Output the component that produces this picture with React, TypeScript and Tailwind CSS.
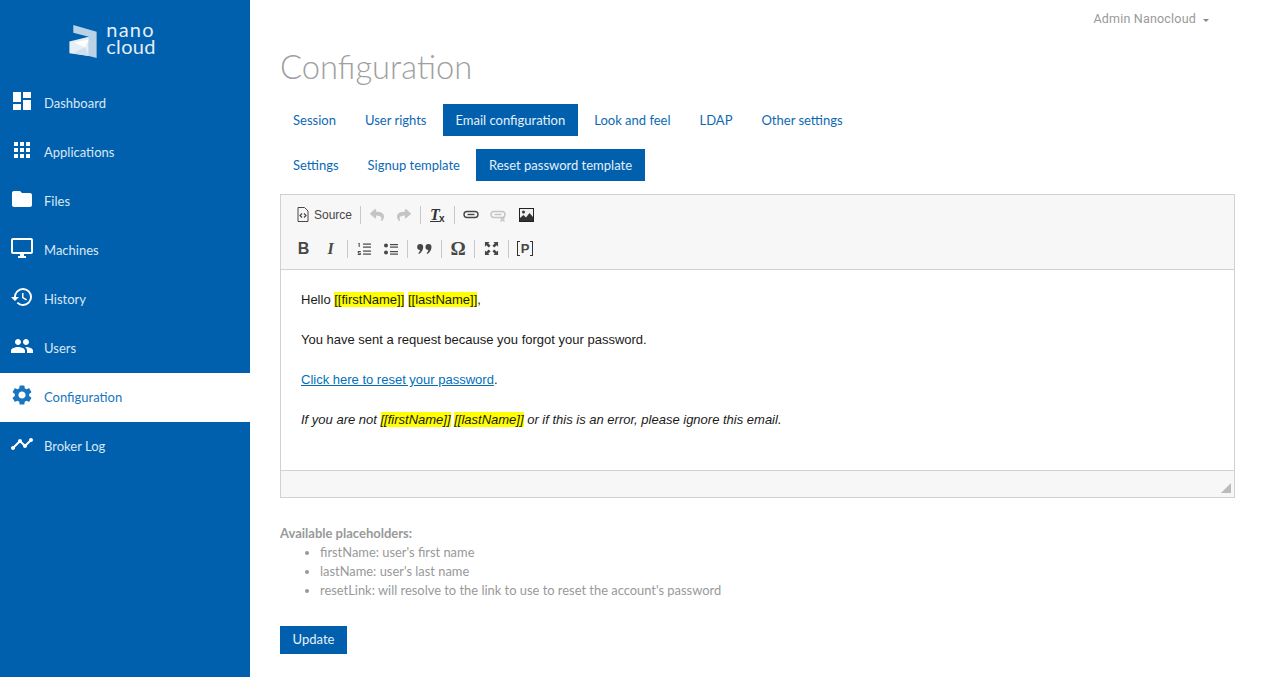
import { MdApps, MdDashboard, MdFolder, MdHistory, MdOutlineDesktopWindows, MdPeople, MdSettings, MdTimeline } from "react-icons/md";
import { FaReply, FaShare } from "react-icons/fa";
import type { ReactNode } from "react";

const navItems = [
  { label: "Dashboard", icon: MdDashboard, size: 24 },
  { label: "Applications", icon: MdApps, size: 24 },
  { label: "Files", icon: MdFolder, size: 24 },
  { label: "Machines", icon: MdOutlineDesktopWindows, size: 24 },
  { label: "History", icon: MdHistory, size: 24 },
  { label: "Users", icon: MdPeople, size: 24 },
  { label: "Configuration", icon: MdSettings, size: 24, active: true },
  { label: "Broker Log", icon: MdTimeline, size: 24 },
];

const mainTabs = ["Session", "User rights", "Email configuration", "Look and feel", "LDAP", "Other settings"];
const subTabs = ["Settings", "Signup template", "Reset password template"];

function Logo() {
  return (
    <div className="flex h-[79px] items-start justify-center pt-[21px] pr-[25px]">
      <svg width="29" height="35" viewBox="0 0 29 36" className="mt-[3px] mr-[8px]">
        <polygon points="4,1 28,8 28,35 20,33 20,13 4,9" fill="#b9d2e6" />
        <polygon points="0,18 20,13 20,33 0,30" fill="#e6eff6" />
        <polygon points="5,19 20,16 16,24" fill="#ffffff" />
        <polygon points="4,30 16,24 20,33" fill="#cfe0ee" />
      </svg>
      <div className="font-['Lato',sans-serif] text-[20px] leading-[17px] font-normal text-[#e4eef6]">
        <div className="tracking-[1.2px]">nano</div>
        <div className="tracking-[0.3px]">cloud</div>
      </div>
    </div>
  );
}

function Sidebar() {
  return (
    <aside className="w-[250px] shrink-0 bg-[#0060ae] font-['Lato',sans-serif] text-[13px]">
      <Logo />
      <nav>
        {navItems.map((item) => {
          const Icon = item.icon;
          return (
            <div
              key={item.label}
              className={`flex h-[49px] items-center ${item.active ? "bg-white text-[#1a75c0]" : "text-[#d9e8f4]"}`}
            >
              <span className={`mb-[6px] flex w-[44px] justify-center ${item.active ? "text-[#1a75c0]" : "text-white"}`}>
                <Icon size={item.size} />
              </span>
              <span>{item.label}</span>
            </div>
          );
        })}
      </nav>
    </aside>
  );
}

function TabRow({ tabs, active, className }: { tabs: string[]; active: string; className: string }) {
  return (
    <div className={`flex font-['Lato',sans-serif] text-[13px] ${className}`}>
      {tabs.map((t) => (
        <div
          key={t}
          className={`mr-[3px] flex items-center px-[13px] pt-[1px] ${t === active ? "bg-[#0060ae] text-[#e6f0f8]" : "text-[#0d69b4]"}`}
        >
          {t}
        </div>
      ))}
    </div>
  );
}

function Sep() {
  return <span className="mx-[2.75px] h-[18px] w-px bg-[#c8c8c8]" />;
}

function Btn({ children }: { children: ReactNode }) {
  return <span className="flex h-[25px] w-[27px] items-center justify-center">{children}</span>;
}

function SourceIcon() {
  return (
    <svg width="12" height="15" viewBox="0 0 12 15" fill="none" stroke="#474747" strokeWidth="1">
      <path d="M1 .5h6.500L11 4v10.500H1z" />
      <path d="M5 6.500L3 8.500l2 2M7 6.500l2 2-2 2" strokeWidth="1.200" />
    </svg>
  );
}

function LinkIcon({ off }: { off?: boolean }) {
  const color = off ? "#c4c4c4" : "#474747";
  return (
    <svg width="16" height="16" viewBox="0 0 16 16" fill="none" stroke={color} strokeWidth="1.400">
      <rect x="1" y="4.500" width="14" height="6" rx="3" />
      <path d="M4.500 7.500h7" />
      {off ? <path d="M10.500 10.500l4 4M14.500 10.500l-4 4" strokeWidth="1.300" /> : null}
    </svg>
  );
}

function ImageIcon() {
  return (
    <svg width="15" height="14" viewBox="0 0 15 14" className="ml-[2px]">
      <rect x=".5" y=".5" width="14" height="13" fill="#f0f0f0" stroke="#222" />
      <circle cx="4.500" cy="4" r="1.500" fill="#333" />
      <path d="M1 13V10l3.500-3 2.500 2.500L10.500 5 14 9v4z" fill="#333" />
    </svg>
  );
}

function NumberedIcon() {
  return (
    <svg width="14" height="14" viewBox="0 0 14 14" fill="#474747">
      <path d="M1.500 1h1.200v4H1.700V2H1zM.800 9h3v.900H1.900v.800h1.900v2.300h-3v-.900h2v-.600H.800z" />
      <rect x="6" y="1.500" width="8" height="1.200" />
      <rect x="6" y="4.500" width="8" height="1.200" />
      <rect x="6" y="8.500" width="8" height="1.200" />
      <rect x="6" y="11.500" width="8" height="1.200" />
    </svg>
  );
}

function BulletedIcon() {
  return (
    <svg width="14" height="14" viewBox="0 0 14 14" fill="#474747">
      <circle cx="2" cy="3.500" r="2" />
      <circle cx="2" cy="10.500" r="2" />
      <rect x="6" y="2" width="8" height="1.200" />
      <rect x="6" y="4.500" width="8" height="1.200" />
      <rect x="6" y="9" width="8" height="1.200" />
      <rect x="6" y="11.500" width="8" height="1.200" />
    </svg>
  );
}

function QuoteIcon() {
  return (
    <svg width="15" height="12" viewBox="0 0 15 12" fill="#474747">
      <path d="M3.200 1a3 3 0 0 1 3 3c0 3-1.800 5.500-4.200 7l-.700-.800c1-1 1.600-2 1.800-3.200a3 3 0 0 1 .100-6z" />
      <path d="M11.500 1a3 3 0 0 1 3 3c0 3-1.800 5.500-4.200 7l-.700-.800c1-1 1.600-2 1.800-3.200a3 3 0 0 1 .100-6z" />
    </svg>
  );
}

function MaximizeIcon() {
  return (
    <svg width="15" height="15" viewBox="0 0 16 16" fill="#474747">
      <path d="M1 1h5L4.500 2.500 7 5 5 7 2.500 4.500 1 6zM15 1v5L13.500 4.500 11 7 9 5 11.500 2.500 10 1zM1 15v-5l1.500 1.500L5 9l2 2-2.500 2.500L6 15zM15 15h-5l1.500-1.500L9 11l2-2 2.500 2.500L15 10z" />
    </svg>
  );
}

function Toolbar() {
  return (
    <div className="flex h-[75px] flex-col border-b border-[#d1d1d1] bg-[#f7f7f7] pl-[9px] pt-[7px] font-['Liberation_Sans',sans-serif] text-[#474747]">
      <div className="flex h-[25px] items-center">
        <span className="flex h-[25px] w-[67px] items-center pl-[7px]">
          <SourceIcon />
          <span className="ml-[5px] text-[12px]">Source</span>
        </span>
        <Sep />
        <Btn><FaReply size={14} className="text-[#c4c4c4]" /></Btn>
        <Btn><FaShare size={14} className="text-[#c4c4c4]" /></Btn>
        <Sep />
        <Btn>
          <span className="relative w-[15px] font-['Liberation_Serif',serif] text-[16px] leading-none font-bold text-[#333] italic underline">
            T<span className="absolute top-[7px] left-[9px] inline-block font-['Liberation_Sans',sans-serif] text-[10px] font-bold not-italic">x</span>
          </span>
        </Btn>
        <Sep />
        <Btn><LinkIcon /></Btn>
        <Btn><LinkIcon off /></Btn>
        <Btn><ImageIcon /></Btn>
      </div>
      <div className="mt-[9px] flex h-[25px] items-center">
        <Btn><span className="text-[16px] font-bold">B</span></Btn>
        <Btn><span className="font-['Liberation_Serif',serif] text-[16px] font-bold italic">I</span></Btn>
        <Sep />
        <Btn><NumberedIcon /></Btn>
        <Btn><BulletedIcon /></Btn>
        <Sep />
        <Btn><QuoteIcon /></Btn>
        <Sep />
        <Btn><span className="font-['Liberation_Serif',serif] text-[19px] leading-none font-bold">Ω</span></Btn>
        <Sep />
        <Btn><MaximizeIcon /></Btn>
        <Sep />
        <Btn>
          <span className="h-[15px] w-[3px] border-y border-l border-[#333]" />
          <span className="mx-[1px] text-[13px] leading-[15px] font-bold">P</span>
          <span className="h-[15px] w-[3px] border-y border-r border-[#333]" />
        </Btn>
      </div>
    </div>
  );
}

function Mark({ children }: { children: string }) {
  return <span className="bg-[#ffff00]">{children}</span>;
}

function Editor() {
  return (
    <div className="mt-[13px] border border-[#d1d1d1]">
      <Toolbar />
      <div className="h-[200px] px-[20px] pt-[20px] font-['Liberation_Sans',sans-serif] text-[13px] leading-[20px] text-[#1a1a1a]">
        <p className="mb-[20px]">
          Hello <Mark>[[firstName]]</Mark> <Mark>[[lastName]]</Mark>,
        </p>
        <p className="mb-[20px]">You have sent a request because you forgot your password.</p>
        <p className="mb-[20px]">
          <a className="text-[#0070b8] underline">Click here to reset your password</a>.
        </p>
        <p className="italic">
          If you are not <Mark>[[firstName]]</Mark> <Mark>[[lastName]]</Mark> or if this is an error, please ignore this email.
        </p>
      </div>
      <div className="relative h-[27px] border-t border-[#d1d1d1] bg-[#f7f7f7]">
        <span className="absolute right-[3px] bottom-[4px] h-0 w-0 border-b-[10px] border-l-[10px] border-b-[#bbb] border-l-transparent" />
      </div>
    </div>
  );
}

export default function App() {
  return (
    <div className="flex h-[677px] overflow-hidden bg-white">
      <Sidebar />
      <main className="flex-1 px-[30px]">
        <div className="flex h-[39px] items-center justify-end pr-[26px] font-['Roboto',sans-serif] text-[12.5px] tracking-[0.2px] text-[#999]">
          Admin Nanocloud
          <span className="mt-[1px] ml-[7px] h-0 w-0 border-x-[3px] border-t-[3px] border-x-transparent border-t-[#888]" />
        </div>
        <h1 className="h-[65px] font-['Lato',sans-serif] text-[32.7px] leading-[56px] font-light text-[#a0a0a0]">Configuration</h1>
        <TabRow tabs={mainTabs} active="Email configuration" className="h-[32px]" />
        <TabRow tabs={subTabs} active="Reset password template" className="mt-[13px] h-[32px]" />
        <Editor />
        <div className="mt-[26px] font-['Lato',sans-serif] text-[12.9px] leading-[19px] text-[#999]">
          <div className="text-[13px] font-bold">Available placeholders:</div>
          <ul className="list-disc pl-[40px]">
            <li>firstName: user's first name</li>
            <li>lastName: user's last name</li>
            <li>resetLink: will resolve to the link to use to reset the account's password</li>
          </ul>
        </div>
        <button className="mt-[26px] h-[28px] w-[67px] bg-[#0060ae] font-['Lato',sans-serif] text-[13px] text-[#e6f0f8]">Update</button>
      </main>
    </div>
  );
}
